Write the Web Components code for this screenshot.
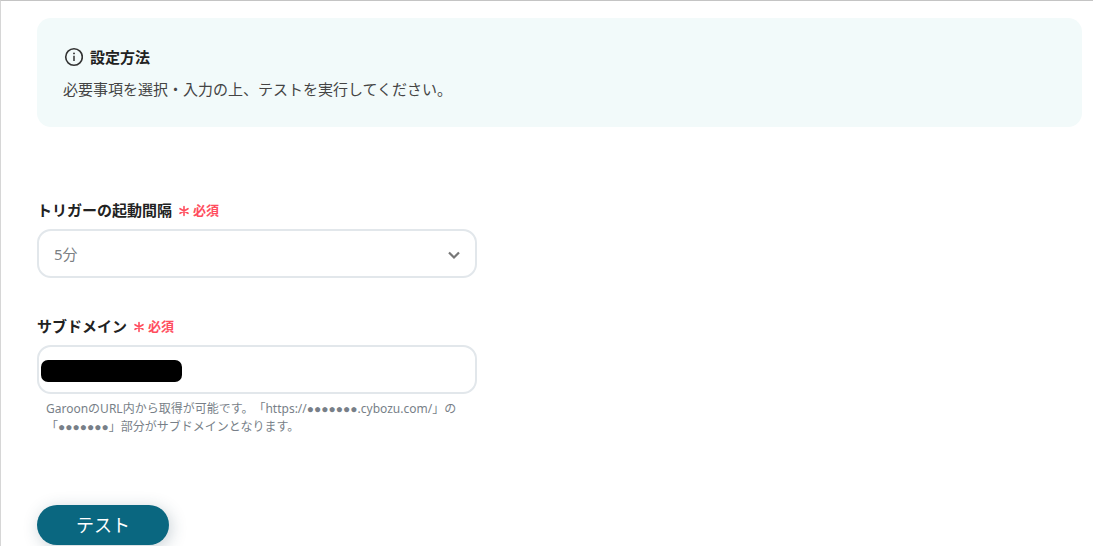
<!DOCTYPE html>
<html lang="ja">
<head>
<meta charset="utf-8">
<meta name="viewport" content="width=device-width, initial-scale=1">
<title>設定方法</title>
<style>
  html { height: 100%; }
  body {
    margin: 0;
    min-height: 100%;
    box-sizing: border-box;
    background: #fff;
    color: #333;
    font: 15px/24px "Noto Sans", "Noto Sans CJK JP", sans-serif;
    text-spacing-trim: space-all;
    border-top: 1px solid #c4c4c4;
    border-left: 1px solid #d6d6d6;
  }
</style>
</head>
<body>
<trigger-settings></trigger-settings>
<script>
  class BaseElement extends HTMLElement {
    render(html) {
      const template = document.createElement('template');
      template.innerHTML = html;
      this.attachShadow({ mode: 'open' }).append(template.content.cloneNode(true));
    }
  }

  customElements.define('info-panel', class extends BaseElement {
    constructor() {
      super();
      this.render(`
        <style>
          :host { display: block; background: #f2fafa; border-radius: 14px; padding: 27px 26px 26px; }
          h2 { display: flex; align-items: center; gap: 7px; margin: 0 0 8px; font-size: 15px; line-height: 24px; font-weight: 700; color: #222; }
          svg { width: 20px; height: 20px; }
          p { margin: 0; line-height: 24px; color: #444; }
        </style>
        <h2>
          <svg viewBox="0 0 20 20" fill="none" stroke="#333" aria-hidden="true">
            <circle cx="11" cy="10" r="8.3" stroke-width="1.6"/>
            <path d="M11 8.8v5.2" stroke-width="1.5"/>
            <circle cx="11" cy="6.4" r="0.95" fill="#333" stroke="none"/>
          </svg>
          <slot name="title"></slot>
        </h2>
        <p><slot></slot></p>`);
    }
  });

  const labelStyles = `
    :host { display: block; max-width: 440px; }
    * { box-sizing: border-box; }
    .label { display: flex; align-items: center; gap: 6px; margin-bottom: 7px; font-size: 15px; line-height: 24px; font-weight: 700; color: #222; }
    .required { display: flex; align-items: center; gap: 3px; font-size: 13px; color: #ff4d5e; }
    .required svg { width: 12px; height: 14px; }
    .box { position: relative; display: block; }
    .control {
      display: block; width: 100%; height: 49px; margin: 0; padding: 0 40px 0 15px;
      appearance: none; background: #fff; border: 2px solid #e2e7eb; border-radius: 14px;
      font: inherit; color: #7b8084;
    }`;
  const requiredMark = `
    <span class="required">
      <svg viewBox="0 0 12 14" fill="none" stroke="currentColor" stroke-width="1.6" stroke-linecap="round" aria-hidden="true">
        <path d="M6 3.5v9M2 5.7l8 4.6M10 5.7l-8 4.6"/>
      </svg>必須</span>`;

  customElements.define('select-field', class extends BaseElement {
    constructor() {
      super();
      this.render(`
        <style>
          ${labelStyles}
          .chevron { position: absolute; right: 16px; top: 19px; width: 14px; height: 14px; pointer-events: none; }
        </style>
        <label class="label" for="control"><slot></slot>${requiredMark}</label>
        <div class="box">
          <select class="control" id="control" required><option>${this.getAttribute('value')}</option></select>
          <svg class="chevron" viewBox="0 0 14 14" fill="none" stroke="#777" stroke-width="2.2" aria-hidden="true"><path d="M2 4.5l5 5 5-5"/></svg>
        </div>`);
    }
  });

  customElements.define('text-field', class extends BaseElement {
    constructor() {
      super();
      this.render(`
        <style>
          ${labelStyles}
          .mask { position: absolute; left: 4px; top: 15px; width: 141px; height: 22px; border-radius: 7px; background: #000; }
          .help { margin: 6px 8px 0 9px; font: 12px/18px "Noto Sans", "Liberation Sans", "Noto Sans CJK JP", sans-serif; color: #787f88; }
        </style>
        <label class="label" for="control"><slot></slot>${requiredMark}</label>
        <div class="box">
          <input class="control" id="control" type="text" required aria-describedby="help">
          <span class="mask"></span>
        </div>
        <p class="help" id="help"><slot name="help"></slot></p>`);
    }
  });

  customElements.define('pill-button', class extends BaseElement {
    constructor() {
      super();
      this.render(`
        <style>
          :host { display: block; }
          button {
            display: block; min-width: 132px; height: 40px; padding: 0 24px; border: 0; border-radius: 20px;
            background: #0a6780; color: #fff; font: inherit; font-size: 18px; line-height: 40px; cursor: pointer;
            box-shadow: 2px 3px 16px rgba(40, 70, 90, .25);
          }
        </style>
        <button type="button"><slot></slot></button>`);
    }
  });

  customElements.define('trigger-settings', class extends BaseElement {
    constructor() {
      super();
      this.render(`
        <style>
          :host { display: block; padding: 17px 11px 0 36px; }
          form { display: flex; flex-direction: column; margin-top: 71px; }
          text-field { margin-top: 36px; }
          pill-button { margin-top: 69px; }
        </style>
        <info-panel><span slot="title">設定方法</span>必要事項を選択・入力の上、テストを実行してください。</info-panel>
        <form>
          <select-field value="5分">トリガーの起動間隔</select-field>
          <text-field>サブドメイン<span slot="help">GaroonのURL内から取得が可能です。「https://●●●●●●●.cybozu.com/」の「●●●●●●●」部分がサブドメインとなります。</span></text-field>
          <pill-button>テスト</pill-button>
        </form>`);
    }
  });
</script>
</body>
</html>
